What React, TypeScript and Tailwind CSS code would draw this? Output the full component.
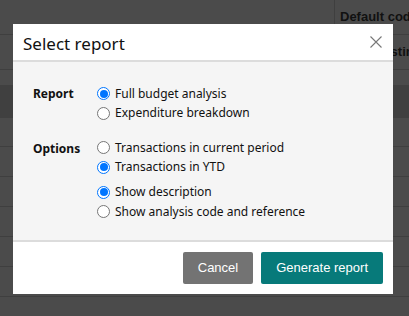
import React from "react";

function Radio({ checked, label }: { checked?: boolean; label: string }) {
  return (
    <div className="flex items-center h-[19.4px]">
      <span
        className={
          checked
            ? "w-[13px] h-[13px] rounded-full border-[1.5px] border-[#0075ff] bg-white flex items-center justify-center shrink-0"
            : "w-[13px] h-[13px] rounded-full border border-[#767676] bg-white shrink-0"
        }
      >
        {checked && <span className="w-[8px] h-[8px] rounded-full bg-[#0075ff]" />}
      </span>
      <span className="ml-[5px] text-[12px] text-[#111] whitespace-nowrap">{label}</span>
    </div>
  );
}

export default function App() {
  const rows = [15, 33, 29, 30, 30, 30, 30, 30, 30];
  return (
    <div className="relative w-[409px] h-[316px] overflow-hidden bg-[#4b4b4b] font-['Liberation_Sans',sans-serif]">
      {/* background table */}
      <div className="flex flex-col">
        <div className="flex h-[35px] border-b border-[#3f3f3f]">
          <div className="w-[335px] shrink-0 border-r border-[#3f3f3f]" />
          <div className="pl-[5px] shrink-0 flex items-center text-[13px] font-bold text-[#111] whitespace-nowrap">Default code</div>
        </div>
        <div className="flex h-[35px] border-b border-[#3f3f3f]">
          <div className="w-[374px] shrink-0" />
          <div className="shrink-0 flex items-center text-[13px] font-bold text-[#111] whitespace-nowrap">Posting</div>
        </div>
        {rows.map((h, i) => (
          <div
            key={i}
            style={{ height: h }}
            className={i === 1 ? "bg-[#404040]" : i >= 2 ? "border-b border-[#3f3f3f]" : ""}
          />
        ))}
      </div>

      {/* modal */}
      <div className="absolute left-[13px] top-[24px] w-[380px] h-[270px] bg-white flex flex-col font-['Noto_Sans',sans-serif]">
        <div className="h-[38px] border-b-2 border-[#dcdcdc] flex items-center justify-between pl-[10px] pr-[11px]">
          <span className="text-[17px] text-[#111] leading-none mt-[3px]">Select report</span>
          <svg width="12" height="12" viewBox="0 0 12 12" className="mt-[-1px]">
            <path d="M0.5 0.5 L11.5 11.5 M11.5 0.5 L0.5 11.5" stroke="#777" strokeWidth="1.1" />
          </svg>
        </div>
        <div className="bg-[#f5f5f5] flex-1 border-b-2 border-[#dcdcdc] pl-[20px] pt-[22px]">
          <div className="flex">
            <div className="w-[64px] h-[19.4px] flex items-center text-[12px] font-bold text-[#111] pt-[1px]">Report</div>
            <div className="flex flex-col">
              <Radio checked label="Full budget analysis" />
              <Radio label="Expenditure breakdown" />
            </div>
          </div>
          <div className="flex mt-[15.5px]">
            <div className="w-[64px] h-[19.4px] flex items-center text-[12px] font-bold text-[#111] pt-[2px]">Options</div>
            <div className="flex flex-col">
              <Radio label="Transactions in current period" />
              <Radio checked label="Transactions in YTD" />
              <div className="h-[5.5px]" />
              <Radio checked label="Show description" />
              <Radio label="Show analysis code and reference" />
            </div>
          </div>
        </div>
        <div className="h-[52px] flex items-center justify-end gap-[8px] pr-[10px]">
          <button className="h-[32px] px-[15px] rounded-[2px] bg-[#737373] text-white text-[13px] font-['Liberation_Sans',sans-serif]">
            Cancel
          </button>
          <button className="h-[32px] px-[15px] rounded-[2px] bg-[#077a7a] text-white text-[13px] font-['Liberation_Sans',sans-serif]">
            Generate report
          </button>
        </div>
      </div>
    </div>
  );
}
